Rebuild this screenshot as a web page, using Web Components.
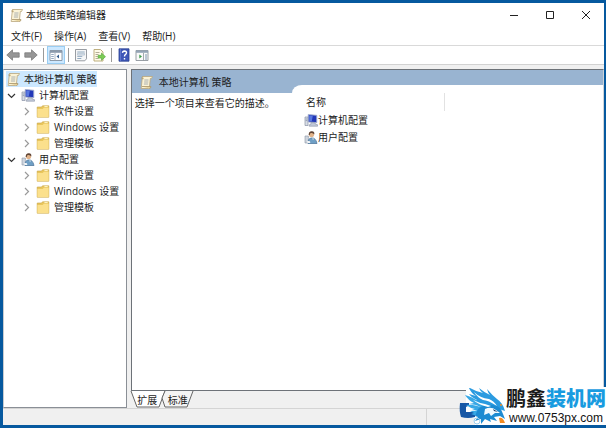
<!DOCTYPE html>
<html lang="zh-CN">
<head>
  <meta charset="UTF-8">
  <meta name="viewport" content="width=device-width, initial-scale=1.0">
  <title>本地组策略编辑器</title>
  <style>
    html, body {
      margin: 0;
      height: 100%;
    }
    body {
      font: 10px/16px "Open Sans", "Noto Sans CJK SC", sans-serif;
      color: #1c1c1c;
      overflow: hidden;
    }
  </style>
</head>
<body>
  <policy-window></policy-window>

  <script type="module">
    const icons = {
      scroll: `<path d="M4 1.5h9.5l-1 2h-1.2l-1 10H2.2l1-10z" fill="#fbf3d6" stroke="#b9a67c" stroke-width=".8"/>
        <path d="M4 1.5q-1.6.4-1 2.2h1.6M10.3 13.5q1.8-.2 1.6-2H3" fill="#e8d49c" stroke="#a8946a" stroke-width=".8"/>
        <path d="M5.3 5h4.2M5.1 7h4.2M4.9 9h4.2" stroke="#98a0a8" stroke-width=".8"/>`,
      computer: `<path d="M1 4h3v8.5H1z" fill="#d8dde6" stroke="#8992a5" stroke-width=".7"/>
        <path d="M1.7 6h1.6M1.7 7.6h1.6" stroke="#6d7890" stroke-width=".6"/>
        <path d="M4.2 1.5l8.6.8v7.4l-8.6-.8z" fill="#2238b8" stroke="#a9b4d0" stroke-width=".9"/>
        <path d="M5.2 2.5l3.6.3-1 5.4-2.6-.2z" fill="#5878e0"/>
        <path d="M7 9.6l4 .2.6 1.5 2 .4v1.5H5.2v-1.4l1.6-.4z" fill="#c2cad9" stroke="#8992a5" stroke-width=".6"/>`,
      user: `<path d="M1 6h3.4v7H1z" fill="#cfd6df" stroke="#8b95a4" stroke-width=".6"/>
        <path d="M4 13.5q-.5-5 3.5-5.6 4.3-.3 5.5 5.6z" fill="#6f9fc5" stroke="#456f96" stroke-width=".7"/>
        <circle cx="7.5" cy="4.4" r="2.6" fill="#e2b48b"/>
        <path d="M4.7 5Q4.5 1 8 1.2q3 .4 2.2 3.4-1-1.8-3-1.6-1.6 0-1.4 2z" fill="#604536"/>
        <path d="M3 10.8l3 .5.3 1.8-3-.2zM8 8.5l1.2 1.5.6-1.4z" fill="#f4f6f8"/>`,
      folder: `<path d="M1.2 3h4.3l1-1.2h6.3v11.4H1.2z" fill="#e9c65d" stroke="#c8a243" stroke-width=".6"/>
        <path d="M1.4 5h5.4l1-1.2h4.8v9.2H1.4z" fill="#fbe08c"/>
        <path d="M8.4 2.6h3.3" stroke="#fff5cc"/>`,
      back: `<path d="M.8 7l5.7-5.2v3h6.7v4.4H6.5v3z" fill="#969696" stroke="#7c7c7c" stroke-width=".8"/>`,
      forward: `<path d="M13.2 7L7.5 1.8v3H.8v4.4h6.7v3z" fill="#969696" stroke="#7c7c7c" stroke-width=".8"/>`,
      tree: `<path d="M1 2.5h12v10H1z" fill="#fff" stroke="#82909e" stroke-width=".9"/>
        <path d="M1 2.5h12v2.3H1z" fill="#8b9aab"/>
        <path d="M6 5v7.5" stroke="#9aa6b2" stroke-width=".8"/>
        <path d="M2.2 6.5h2.6M2.2 8.5h2.6M2.2 10.5h2.6" stroke="#6787a8" stroke-width=".7"/>
        <path d="M10 6.5v4L7.5 8.5z" fill="#375f8e"/>`,
      properties: `<path d="M1.5 1.5h11v9.3l-1.7 2H1.5z" fill="#f6f7f8" stroke="#8d9299" stroke-width=".9"/>
        <path d="M3.3 4h7.4M3.3 8.4h5M3.3 10.5h4" stroke="#87a1ba" stroke-width=".9"/>
        <path d="M3.5 5.4h7v1.7h-7z" fill="#d7e3ee" stroke="#9cabba" stroke-width=".5"/>`,
      export: `<path d="M2 1.5h6.5L11 4v9H2z" fill="#fffbe8" stroke="#b7a672" stroke-width=".9"/>
        <path d="M3.5 4.5h4M3.5 6.5h3M3.5 8.5h2.4M3.5 10.5h3" stroke="#a29b83" stroke-width=".8"/>
        <path d="M6.2 7.3h3.3V5.1l4 3.6-4 3.6v-2.2H6.2z" fill="#7ccc55" stroke="#4ea336" stroke-width=".6"/>`,
      help: `<path d="M2 .8h10v12.4H2z" fill="#3f57b8" stroke="#263d8f" stroke-width=".8"/>
        <path d="M3.4 1v12" stroke="#7288d8" stroke-width=".7"/>
        <path d="M5.5 4.9Q5.6 3 7.5 3q2 .1 2 1.8 0 1.1-1.2 1.8-.8.5-.8 1.8M7.5 10v1.4" fill="none" stroke="#fff" stroke-width="1.4"/>`,
      pane: `<path d="M1 2.5h12v10H1z" fill="#fafafa" stroke="#8d949b" stroke-width=".9"/>
        <path d="M1 2.5h12v2.3H1z" fill="#95a5b6"/>
        <path d="M8.5 5v7.5" stroke="#8d949b" stroke-width=".8"/>
        <path d="M10 7h2M10 9h2M10 11h2" stroke="#5c7b9c" stroke-width=".8"/>
        <path d="M4.3 6.4v4.2L7 8.5z" fill="#3f9d4e"/>`
    };

    class PolicyIcon extends HTMLElement {
      constructor() {
        super();
        this.attachShadow({ mode: 'open' });
      }

      connectedCallback() {
        this.shadowRoot.innerHTML = `
          <style>
            :host { display: block; flex: none; width: 14px; height: 14px; }
            svg { display: block; width: 100%; height: 100%; }
          </style>
          <svg viewBox="0 0 14 14" aria-hidden="true">${icons[this.getAttribute('name')]}</svg>
        `;
      }
    }
    customElements.define('policy-icon', PolicyIcon);

    class TitleBar extends HTMLElement {
      constructor() {
        super();
        this.attachShadow({ mode: 'open' });
        this.shadowRoot.innerHTML = `
          <style>
            :host { display: flex; align-items: center; height: 24px; padding-left: 6px; background: #fff; }
            h1 { flex: 1; margin: 0 0 0 3px; font: inherit; }
            button { width: 36px; height: 24px; padding: 0; border: 0; background: none; }
            svg { display: block; margin: auto; width: 10px; height: 10px; fill: none; stroke: #222; }
          </style>
          <policy-icon name="scroll"></policy-icon>
          <h1><slot></slot></h1>
          <button aria-label="最小化"><svg viewBox="0 0 10 10"><path d="M1 5.5h8"/></svg></button>
          <button aria-label="最大化"><svg viewBox="0 0 10 10"><path d="M1.5 1.5h7v7h-7z"/></svg></button>
          <button aria-label="关闭"><svg viewBox="0 0 10 10"><path d="M1 1l8 8M9 1l-8 8"/></svg></button>
        `;
      }
    }
    customElements.define('title-bar', TitleBar);

    class MenuBar extends HTMLElement {
      constructor() {
        super();
        this.attachShadow({ mode: 'open' });
        this.shadowRoot.innerHTML = `
          <style>
            :host { display: flex; gap: 12px; height: 18px; padding-left: 8px; background: #fff; border-bottom: 1px solid #d9d9d9; }
            button { padding: 0; border: 0; background: none; font: inherit; color: inherit; }
          </style>
          <button>文件(F)</button>
          <button>操作(A)</button>
          <button>查看(V)</button>
          <button>帮助(H)</button>
        `;
      }
    }
    customElements.define('menu-bar', MenuBar);

    class ToolBar extends HTMLElement {
      constructor() {
        super();
        this.attachShadow({ mode: 'open' });
        this.shadowRoot.innerHTML = `
          <style>
            :host { display: flex; align-items: center; height: 18px; padding-left: 1px; background: #fff; border-bottom: 1px solid #d2d2d2; }
            button { display: flex; align-items: center; justify-content: center; width: 18px; height: 18px; padding: 0; border: 0; background: none; }
            .on { background: #cce8ff; box-shadow: inset 0 0 0 1px #99cdf2; }
            i { width: 1px; height: 14px; margin: 0 3px; background: #9a9a9a; }
          </style>
          <button aria-label="后退"><policy-icon name="back"></policy-icon></button>
          <button aria-label="前进"><policy-icon name="forward"></policy-icon></button>
          <i></i>
          <button class="on" aria-label="显示/隐藏控制台树"><policy-icon name="tree"></policy-icon></button>
          <i></i>
          <button aria-label="属性"><policy-icon name="properties"></policy-icon></button>
          <button aria-label="导出列表"><policy-icon name="export"></policy-icon></button>
          <i></i>
          <button aria-label="帮助"><policy-icon name="help"></policy-icon></button>
          <button aria-label="显示/隐藏操作窗格"><policy-icon name="pane"></policy-icon></button>
        `;
      }
    }
    customElements.define('tool-bar', ToolBar);

    // one row of the console tree; children go in the default slot
    class TreeNode extends HTMLElement {
      constructor() {
        super();
        this.attachShadow({ mode: 'open' });
      }

      connectedCallback() {
        const state = this.getAttribute('state');
        const arrow = state === 'open' ? 'M1 3l3.5 3.5L8 3' : 'M3 1l3.5 3.5L3 8';
        const button = state
          ? `<button aria-label="展开"><svg viewBox="0 0 9 9" class="${state}"><path d="${arrow}"/></svg></button>`
          : '';
        this.shadowRoot.innerHTML = `
          <style>
            :host { display: block; }
            .row { display: flex; align-items: center; width: max-content; height: 16px; white-space: nowrap; }
            :host([selected]) .row { background: #cce8ff; }
            button { width: 15px; height: 16px; padding: 0; border: 0; background: none; }
            svg { display: block; width: 9px; height: 9px; margin-left: 1px; fill: none; stroke: #9a9a9a; stroke-width: 1.2; }
            svg.open { stroke: #333; }
            span { margin-left: 4px; }
            .children { padding-left: 15px; }
            :host([root]) .children { padding-left: 0; }
          </style>
          <div class="row">${button}<policy-icon name="${this.getAttribute('icon')}"></policy-icon><span>${this.getAttribute('label')}</span></div>
          <div class="children"><slot></slot></div>
        `;
      }
    }
    customElements.define('tree-node', TreeNode);

    class TreePane extends HTMLElement {
      constructor() {
        super();
        this.attachShadow({ mode: 'open' });
        this.shadowRoot.innerHTML = `
          <style>
            :host { display: block; box-sizing: border-box; flex: 20 0 0; min-width: 0; padding: 1px 0 0 2px; overflow: hidden; background: #fff; border: 1px solid #8a8f96; border-left-color: #c8ccd0; }
          </style>
          <slot></slot>
        `;
      }
    }
    customElements.define('tree-pane', TreePane);

    class DetailPane extends HTMLElement {
      constructor() {
        super();
        this.attachShadow({ mode: 'open' });
        this.shadowRoot.innerHTML = `
          <style>
            :host { display: flex; flex-direction: column; flex: 79 0 0; min-width: 0; }
            .view { display: flex; flex: 1; background: #99b4d1; border: 1px solid #6d7278; border-right-color: #d0d4d8; }
            .info { display: flex; flex-direction: column; width: 34%; }
            h2 { display: flex; align-items: center; gap: 6px; height: 23px; margin: 0; padding-left: 7px; font: inherit; }
            p { flex: 1; margin: 0; padding: 2px 0 0 3px; background: #fff; white-space: nowrap; }
            .list { display: flex; flex: 1; }
            .sheet { flex: 1; margin-top: 15px; padding: 8px 0 0 12px; background: #fff; border-top-left-radius: 10px 8px; }
            table { border-collapse: collapse; }
            th { width: 138px; height: 18px; padding: 0 0 0 2px; border-right: 1px solid #e2e2e2; font: inherit; text-align: left; }
            td { height: 17px; padding: 0; }
            td div { display: flex; align-items: center; }
            .tabs { display: flex; height: 17px; }
            .tabs button { position: relative; height: 17px; padding: 0; border: 0; background: none; font: inherit; color: inherit; }
            .tabs svg { position: absolute; left: 0; top: 0; width: 100%; height: 100%; overflow: visible; stroke: #666; }
            .tabs span { position: relative; }
            .first { width: 33px; }
            .second { width: 28px; }
          </style>
          <div class="view">
            <section class="info">
              <h2><policy-icon name="scroll"></policy-icon>本地计算机 策略</h2>
              <p>选择一个项目来查看它的描述。</p>
            </section>
            <section class="list">
              <div class="sheet">
                <table>
                  <thead><tr><th>名称</th></tr></thead>
                  <tbody>
                    <tr><td><div><policy-icon name="computer"></policy-icon>计算机配置</div></td></tr>
                    <tr><td><div><policy-icon name="user"></policy-icon>用户配置</div></td></tr>
                  </tbody>
                </table>
              </div>
            </section>
          </div>
          <div class="tabs">
            <button class="first"><svg viewBox="0 0 33 17"><path d="M0 0l6 16h22l6-16" fill="#fff"/></svg><span>扩展</span></button>
            <button class="second"><svg viewBox="0 0 28 17"><path d="M1 0l-3 7 3 9h22l6-16" fill="#f4f4f4"/></svg><span>标准</span></button>
          </div>
        `;
      }
    }
    customElements.define('detail-pane', DetailPane);

    class StatusBar extends HTMLElement {
      constructor() {
        super();
        this.attachShadow({ mode: 'open' });
        this.shadowRoot.innerHTML = `
          <style>
            :host { display: flex; justify-content: flex-end; height: 16px; background: #f0f0f0; border-top: 1px solid #d4d4d4; }
            span { width: 88px; border-left: 1px solid #d4d4d4; }
          </style>
          <span></span><span></span>
        `;
      }
    }
    customElements.define('status-bar', StatusBar);

    class SiteMark extends HTMLElement {
      constructor() {
        super();
        this.attachShadow({ mode: 'open' });
        this.shadowRoot.innerHTML = `
          <style>
            :host { display: flex; align-items: flex-end; }
            svg { display: block; width: 48px; height: 38px; }
            .text { background: #fff; }
            .name { font: 700 20px/24px "Liberation Sans", "Noto Sans CJK SC", sans-serif; color: #1b1b1b; }
            .name b { color: #189be0; }
            .url { font: 12px/14px "Liberation Sans", sans-serif; color: #111; text-align: center; }
          </style>
          <svg viewBox="0 0 48 38" aria-hidden="true">
            <path d="M8 0h40v38H17v-7H8z" fill="#fff"/>
            <path d="M2 16h9v2.5L8 20v5h9v5q-7 2-14 0-2-6-1-14z" fill="#1757a5"/>
            <path d="M12 1q7 4 13 5-3-2-4-5 6 5 11 7-2-2-3-6 5 6 10 10 6 4 8 12l-6-2-12-1-9-5-6-3 5 0q-6-3-8-6l7 2q-5-3-7-8z" fill="#2b9be0"/>
            <path d="M7 8q8 2 14 7l10 5-4 2-9-4-7-1 5-1q-6-3-9-8zM8 18q9-1 18 4l-4 3-8-3 3 0q-5-1-9-4zM12 24q6-1 10 1l-3 4-6-2 3-1z" fill="#38a8e6"/>
            <path d="M20 22q6-5 15-4 8 1 10 9l2 5-5-3-6 1 3 4-7-2 1 3-6-3-4 5v-5l-6 2 3-4-3-1z" fill="#1d8bd2"/>
            <path d="M16 5q6 6 15 7 5 2 8 7-9-6-14-6-6-3-9-8zM15 13q6 3 12 4l6 2-3 1q-9-2-15-7z" fill="#fff"/>
            <path d="M27 22q6-3 11 1l4 3-5 0-4 3-2-3-5 2z" fill="#f2faff"/>
            <path d="M35 22l5 3-4-1z" fill="#14355f"/>
            <circle cx="19" cy="34" r="3" fill="none" stroke="#9ccfee"/>
            <path d="M41 31q4-1 6 5h-5z" fill="#f28b22"/>
            <circle cx="43" cy="18" r="1" fill="#f28b22"/>
          </svg>
          <div class="text">
            <div class="name">鹏鑫<b>装机网</b></div>
            <div class="url">www.0753px.com</div>
          </div>
        `;
      }
    }
    customElements.define('site-mark', SiteMark);

    class PolicyWindow extends HTMLElement {
      constructor() {
        super();
        this.attachShadow({ mode: 'open' });
        this.shadowRoot.innerHTML = `
          <style>
            :host { position: relative; display: flex; flex-direction: column; box-sizing: border-box; height: 100vh; border: 3px solid #06599f; border-right-width: 2px; background: #f0f0f0; }
            main { display: flex; flex: 1; gap: 4px; padding-top: 4px; min-height: 0; }
            site-mark { position: absolute; right: -2px; bottom: 0; }
          </style>
          <title-bar>本地组策略编辑器</title-bar>
          <menu-bar></menu-bar>
          <tool-bar></tool-bar>
          <main>
            <tree-pane>
              <tree-node root selected icon="scroll" label="本地计算机 策略">
                <tree-node state="open" icon="computer" label="计算机配置">
                  <tree-node state="closed" icon="folder" label="软件设置"></tree-node>
                  <tree-node state="closed" icon="folder" label="Windows 设置"></tree-node>
                  <tree-node state="closed" icon="folder" label="管理模板"></tree-node>
                </tree-node>
                <tree-node state="open" icon="user" label="用户配置">
                  <tree-node state="closed" icon="folder" label="软件设置"></tree-node>
                  <tree-node state="closed" icon="folder" label="Windows 设置"></tree-node>
                  <tree-node state="closed" icon="folder" label="管理模板"></tree-node>
                </tree-node>
              </tree-node>
            </tree-pane>
            <detail-pane></detail-pane>
          </main>
          <status-bar></status-bar>
          <site-mark></site-mark>
        `;
      }
    }
    customElements.define('policy-window', PolicyWindow);
  </script>
</body>
</html>
